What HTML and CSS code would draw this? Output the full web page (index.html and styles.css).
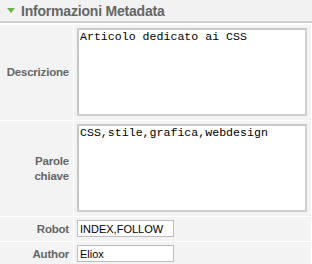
FILE: index.html
```html
<!DOCTYPE html>
<html lang="it">
<head>
<meta charset="utf-8">
<link rel="stylesheet" href="styles.css">
</head>
<body>
<div class="panel">
  <div class="panel-head">
    <span class="arrow"></span>
    <span class="title">Informazioni Metadata</span>
  </div>
  <table class="meta">
    <tr>
      <td class="label">Descrizione</td>
      <td class="field"><textarea class="area">Articolo dedicato ai CSS</textarea></td>
    </tr>
    <tr>
      <td class="label">Parole chiave</td>
      <td class="field"><textarea class="area">CSS,stile,grafica,webdesign</textarea></td>
    </tr>
    <tr>
      <td class="label">Robot</td>
      <td class="field"><input class="text" type="text" value="INDEX,FOLLOW"></td>
    </tr>
    <tr>
      <td class="label">Author</td>
      <td class="field"><input class="text" type="text" value="Eliox"></td>
    </tr>
  </table>
</div>
</body>
</html>
```
FILE: styles.css
```css
html, body {
  margin: 0;
  padding: 0;
  background: #ffffff;
}
.panel {
  width: 312px;
  font-family: "Liberation Sans", Arial, sans-serif;
}
.panel-head {
  height: 21px;
  background: #f2f2f2;
  border-bottom: 2px solid #cfcfcf;
  display: flex;
  align-items: center;
  padding-left: 7px;
  gap: 6px;
}
.arrow {
  width: 0;
  height: 0;
  border-left: 4px solid transparent;
  border-right: 4px solid transparent;
  border-top: 5px solid #6cb33f;
}
.title {
  font-family: "Liberation Sans", Arial, sans-serif;
  font-weight: bold;
  font-size: 14px;
  color: #666666;
  letter-spacing: -0.2px;
}
.meta {
  border-collapse: separate;
  border-spacing: 0 1px;
  width: 311px;
  margin-top: 1px;
}
.meta td {
  padding: 0;
}
.label {
  width: 69px;
  background: #f3f3f3;
  text-align: right;
  vertical-align: middle;
  padding-right: 4px !important;
  font-size: 11.5px;
  font-weight: bold;
  color: #666666;
  line-height: 15px;
  letter-spacing: -0.2px;
  border-right: 1px solid #ffffff;
}
.field {
  background: #f3f3f3;
  padding: 3px 4px 4px 3px !important;
}
.area {
  display: block;
  box-sizing: border-box;
  width: 230px;
  height: 88px;
  margin: 0;
  padding: 0 1px;
  border: 2px solid #c8c8c8;
  border-right-color: #cfcfcf;
  border-bottom-color: #cfcfcf;
  background: #ffffff;
  font-family: "Liberation Mono", "Courier New", monospace;
  font-size: 11.6px;
  line-height: 13px;
  color: #000000;
  resize: none;
  overflow: hidden;
}
.text {
  display: block;
  box-sizing: border-box;
  width: 97px;
  height: 17px;
  margin: 0;
  padding: 0 2px;
  border: 1px solid #bdbdbd;
  background: #ffffff;
  font-family: "Liberation Sans", Tahoma, sans-serif;
  font-size: 11px;
  color: #000000;
}
```
